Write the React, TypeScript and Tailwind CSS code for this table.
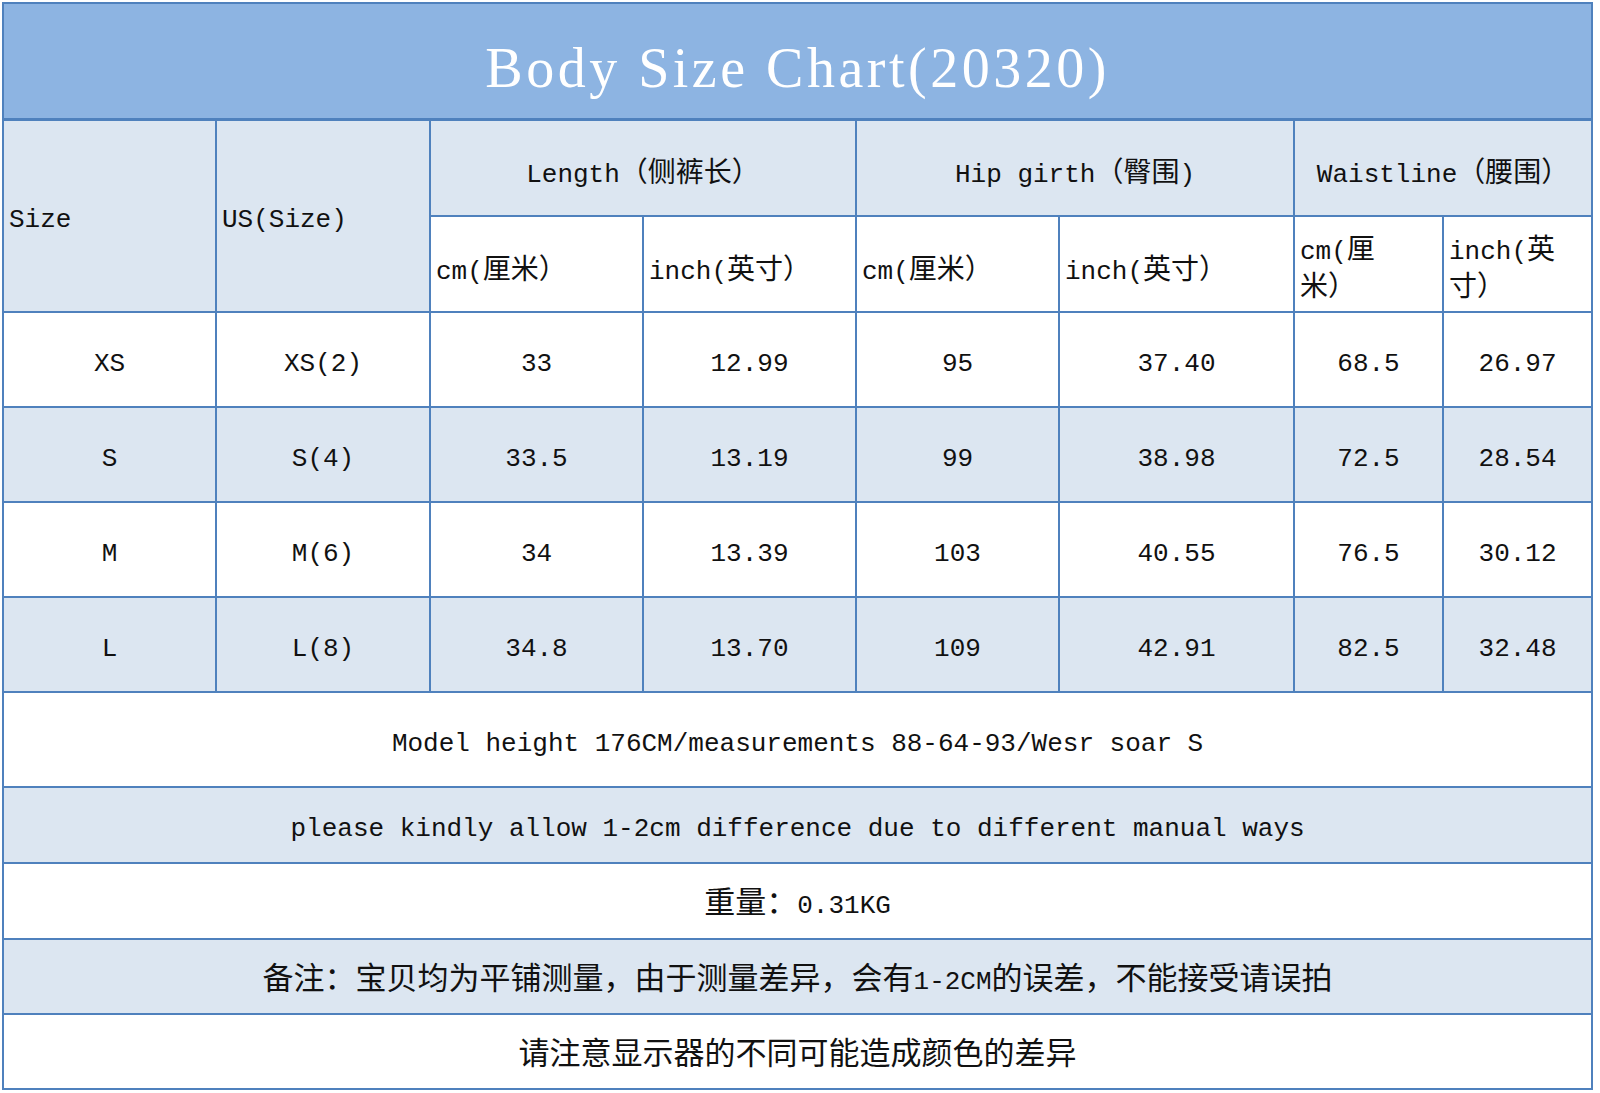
import React from 'react';

const cjkRun = /([\u2E80-\u9FFF\u3000-\u303F\uFF00-\uFFEF]+)/;

// split a label into latin / CJK runs so each gets its own font
function Label({ text, big = false }: { text: string; big?: boolean }) {
  const parts = text.split(cjkRun).filter(p => p !== '');
  return (
    <>
      {parts.map((p, i) =>
        cjkRun.test(p) ? (
          <span
            key={i}
            className={
              big
                ? "font-['Noto_Sans_CJK_SC',sans-serif] text-[31px]"
                : "font-['Noto_Sans_CJK_SC',sans-serif] text-[28px]"
            }
          >
            {p}
          </span>
        ) : (
          <span key={i}>{p}</span>
        )
      )}
    </>
  );
}

const rows = [
  { size: 'XS', us: 'XS(2)', v: ['33', '12.99', '95', '37.40', '68.5', '26.97'] },
  { size: 'S', us: 'S(4)', v: ['33.5', '13.19', '99', '38.98', '72.5', '28.54'] },
  { size: 'M', us: 'M(6)', v: ['34', '13.39', '103', '40.55', '76.5', '30.12'] },
  { size: 'L', us: 'L(8)', v: ['34.8', '13.70', '109', '42.91', '82.5', '32.48'] },
];

const notes = [
  { text: 'Model height 176CM/measurements 88-64-93/Wesr soar S', h: 'h-[95px] pt-[10px]', light: false },
  { text: 'please kindly allow 1-2cm difference due to different manual ways', h: 'h-[76px] pt-[10px]', light: true },
  { text: '重量：0.31KG', h: 'h-[76px] pt-[2px]', light: false },
  { text: '备注：宝贝均为平铺测量，由于测量差异，会有1-2CM的误差，不能接受请误拍', h: 'h-[75px] pt-[2px]', light: true },
  { text: '请注意显示器的不同可能造成颜色的差异', h: 'h-[75px] pt-[2px]', light: false },
];

const cell = 'border-2 border-[#4f81bd] px-[5px] align-middle';

function App() {
  return (
    <div className="min-h-screen bg-white p-[2px] text-[#111] font-['Liberation_Mono',monospace] text-[26px] leading-[1.15]">
      <table className="table-fixed border-collapse w-[1589px]">
        <colgroup>
          <col className="w-[213px]" />
          <col className="w-[214px]" />
          <col className="w-[213px]" />
          <col className="w-[213px]" />
          <col className="w-[203px]" />
          <col className="w-[235px]" />
          <col className="w-[149px]" />
          <col className="w-[149px]" />
        </colgroup>
        <tbody>
          <tr>
            <td
              colSpan={8}
              className="h-[116px] pt-[14px] border-2 border-b-[3px] border-[#4f81bd] bg-[#8db4e2] text-center align-middle text-white font-['Liberation_Serif',serif] text-[56px] tracking-[3.5px] leading-none"
            >
              Body Size Chart(20320)
            </td>
          </tr>
          <tr>
            <td rowSpan={2} className={`${cell} pt-[10px] bg-[#dce6f1] text-left`}>Size</td>
            <td rowSpan={2} className={`${cell} pt-[10px] bg-[#dce6f1] text-left`}>US(Size)</td>
            <td colSpan={2} className={`${cell} pt-[10px] h-[97px] bg-[#dce6f1] text-center`}>
              <Label text="Length（侧裤长）" />
            </td>
            <td colSpan={2} className={`${cell} pt-[10px] bg-[#dce6f1] text-center`}>
              <Label text="Hip girth（臀围)" />
            </td>
            <td colSpan={2} className={`${cell} pt-[10px] bg-[#dce6f1] text-center whitespace-nowrap`}>
              <Label text="Waistline（腰围）" />
            </td>
          </tr>
          <tr>
            <td className={`${cell} pt-[10px] h-[96px] bg-white`}><Label text="cm(厘米）" /></td>
            <td className={`${cell} pt-[10px] bg-white`}><Label text="inch(英寸）" /></td>
            <td className={`${cell} pt-[10px] bg-white`}><Label text="cm(厘米）" /></td>
            <td className={`${cell} pt-[10px] bg-white`}><Label text="inch(英寸）" /></td>
            <td className={`${cell} pt-[8px] bg-white leading-[1.2]`}>
              <Label text="cm(厘" />
              <br />
              <Label text="米）" />
            </td>
            <td className={`${cell} pt-[8px] bg-white leading-[1.2]`}>
              <Label text="inch(英" />
              <br />
              <Label text="寸）" />
            </td>
          </tr>
          {rows.map((r, i) => (
            <tr key={r.size} className={i % 2 === 1 ? 'bg-[#dce6f1]' : 'bg-white'}>
              <td className={`${cell} pt-[10px] h-[95px] text-center`}>{r.size}</td>
              <td className={`${cell} pt-[10px] text-center`}>{r.us}</td>
              {r.v.map((v, j) => (
                <td key={j} className={`${cell} pt-[10px] text-center`}>{v}</td>
              ))}
            </tr>
          ))}
          {notes.map(n => (
            <tr key={n.text} className={n.light ? 'bg-[#dce6f1]' : 'bg-white'}>
              <td colSpan={8} className={`${cell} ${n.h} text-center`}>
                <Label text={n.text} big />
              </td>
            </tr>
          ))}
        </tbody>
      </table>
    </div>
  );
}

export default App;
